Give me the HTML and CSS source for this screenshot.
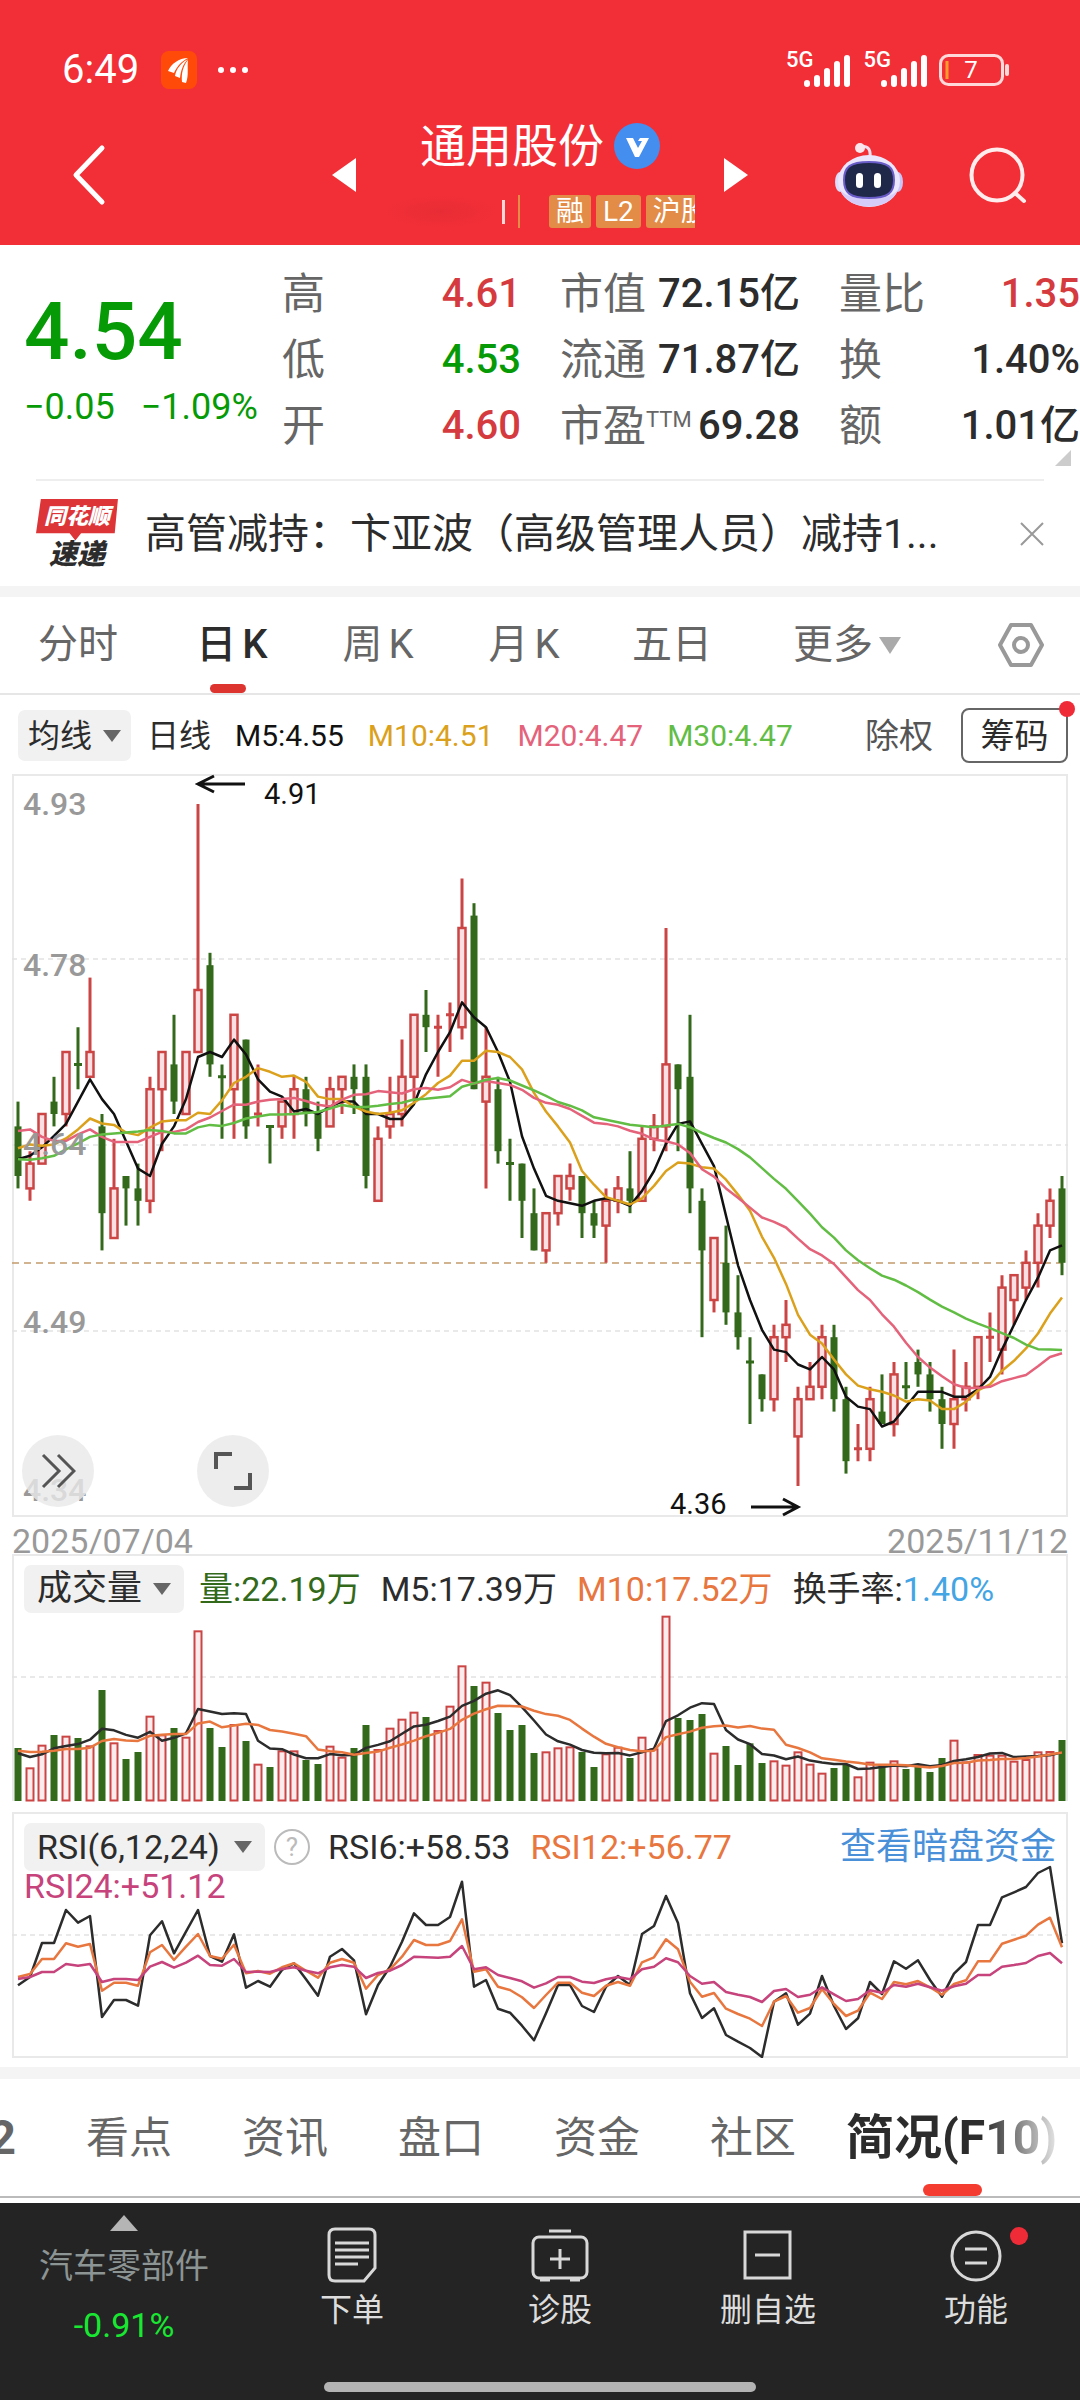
FILE: index.html
```html
<!DOCTYPE html>
<html lang="zh-CN">
<head>
<meta charset="utf-8">
<meta name="viewport" content="width=device-width">
<title>通用股份</title>
<link rel="stylesheet" href="styles.css">
</head>
<body>
<header class="top">
  <div class="status">
    <span class="clock">6:49</span>
    <svg class="app" width="36" height="38" viewBox="0 0 36 38"><rect width="36" height="38" rx="8" fill="#ff4a0a"/><path d="M7 20C10 13 18 7 27 7c-6 3-11 8-14 15zM14 25c1-7 6-13 13-17-5 5-7 11-8 19zM21 31c-1-8 1-16 6-22-1 7 1 15-2 23z" fill="#fff"/></svg>
    <svg class="more" width="32" height="8" viewBox="0 0 32 8" fill="#fff"><circle cx="4" cy="4" r="3"/><circle cx="16" cy="4" r="3"/><circle cx="28" cy="4" r="3"/></svg>
    <span class="spring"></span>
    <span class="net">5G</span>
    <svg class="bars" width="46" height="34" viewBox="0 0 46 34" stroke="#fff" stroke-width="6" stroke-linecap="round"><path d="M3 30v1M13 25v6M23 18v13M33 11v20M43 5v26"/></svg>
    <span class="net">5G</span>
    <svg class="bars" width="46" height="34" viewBox="0 0 46 34" stroke="#fff" stroke-width="6" stroke-linecap="round"><path d="M3 30v1M13 25v6M23 18v13M33 11v20M43 5v26"/></svg>
    <svg class="battery" width="72" height="32" viewBox="0 0 72 32"><rect x="1.500" y="1.500" width="62" height="29" rx="8" fill="none" stroke="#ffd9da" stroke-width="3"/><path d="M68 12v8" stroke="#ffd9da" stroke-width="4" stroke-linecap="round"/><path d="M8 7v18" stroke="#ff9a2e" stroke-width="3"/><text x="32" y="24" text-anchor="middle" class="battery-text">7</text></svg>
  </div>
  <nav class="nav">
    <button class="icon-btn" aria-label="返回"><svg width="34" height="62" viewBox="0 0 34 62"><path d="M30 4 4 31l26 27" fill="none" stroke="#fff" stroke-width="5" stroke-linecap="round" stroke-linejoin="round"/></svg></button>
    <div class="switcher">
      <button class="icon-btn" aria-label="上一只"><svg width="24" height="34" viewBox="0 0 24 34"><path d="M24 0v34L0 17z" fill="#fff"/></svg></button>
      <div class="stock">
        <h1>通用股份<svg width="46" height="46" viewBox="0 0 46 46"><circle cx="23" cy="23" r="23" fill="#438eee"/><path d="M12 15h7l5 10 4-7h-4l2-3h9L25 34h-4z" fill="#fff"/></svg></h1>
        <div class="tags"><i class="smudge"></i><i class="sliver"></i><i class="rule"></i><span>融</span><span>L2</span><span>沪股</span></div>
      </div>
      <button class="icon-btn" aria-label="下一只"><svg width="24" height="34" viewBox="0 0 24 34"><path d="M0 0v34l24-17z" fill="#fff"/></svg></button>
    </div>
    <div class="tools">
      <button class="icon-btn" aria-label="智能助手"><svg width="68" height="66" viewBox="0 0 68 66"><path d="M24 6c7-4 12 0 11 9" fill="none" stroke="#f0dff0" stroke-width="3"/><circle cx="25" cy="6" r="5" fill="#fbe6ee"/><ellipse cx="5" cy="40" rx="5" ry="10" fill="#dcdcfb"/><ellipse cx="63" cy="40" rx="5" ry="10" fill="#c8c4f8"/><ellipse cx="34" cy="39" rx="31" ry="26" fill="#ebe6fb"/><path d="M5 48c8 22 50 22 58 0-10 12-48 12-58 0z" fill="#d5ccfa"/><path d="M34 20c19 0 25 5 25 18S53 56 34 56 9 51 9 38s6-18 25-18z" fill="#1f2848" stroke="#6a5cc8" stroke-width="2"/><rect x="21" y="31" width="7" height="15" rx="3.500" fill="#fff"/><rect x="39" y="31" width="7" height="15" rx="3.500" fill="#fff"/></svg></button>
      <button class="icon-btn" aria-label="搜索"><svg width="58" height="58" viewBox="0 0 58 58" fill="none" stroke="#ffeced" stroke-width="4" stroke-linecap="round"><circle cx="28" cy="29" r="25.500"/><path d="m46 47 9 8"/></svg></button>
    </div>
  </nav>
</header>
<main>
  <section class="quote">
    <div class="price"><strong>4.54</strong><p><span>−0.05</span><span>−1.09%</span></p></div>
    <dl><div><dt>高</dt><dd class="up">4.61</dd></div><div><dt>低</dt><dd class="down">4.53</dd></div><div><dt>开</dt><dd class="up">4.60</dd></div></dl>
    <dl><div><dt>市值</dt><dd>72.15亿</dd></div><div><dt>流通</dt><dd>71.87亿</dd></div><div><dt>市盈<sup>TTM</sup></dt><dd>69.28</dd></div></dl>
    <dl><div><dt>量比</dt><dd class="up">1.35</dd></div><div><dt>换</dt><dd>1.40%</dd></div><div><dt>额</dt><dd>1.01亿</dd></div></dl>
    <i class="corner"></i>
  </section>
  <section class="news">
    <div class="news-logo"><b>同花顺</b><em>速递</em></div>
    <a href="#news">高管减持：卞亚波（高级管理人员）减持1...</a>
    <button class="icon-btn" aria-label="关闭"><svg width="24" height="24" viewBox="0 0 24 24"><path d="m1 1 22 22M23 1 1 23" stroke="#999" stroke-width="2"/></svg></button>
  </section>
  <nav class="periods">
    <button>分时</button><button class="on">日<span>K</span></button><button>周<span>K</span></button><button>月<span>K</span></button><button>五日</button><button>更多<i class="tri light"></i></button>
    <button aria-label="设置"><svg width="46" height="46" viewBox="0 0 46 46" fill="none" stroke="#999" stroke-width="4" stroke-linejoin="round"><path d="M13 3h20l11 20-11 20H13L2 23z"/><circle cx="23" cy="23" r="7"/></svg></button>
  </nav>
  <section class="legend">
    <label class="pick"><select aria-label="主图指标"><option>均线</option></select><i class="tri"></i></label>
    <span class="day">日线</span><span class="c-black">M5:4.55</span><span class="c-gold">M10:4.51</span><span class="c-pink">M20:4.47</span><span class="c-green">M30:4.47</span>
    <button class="adjust">除权</button><button class="chips">筹码<i class="dot"></i></button>
  </section>
  <section class="charts">
    <div class="panel">
      <svg id="kline" class="plot" viewBox="0 0 1056 743" role="img" aria-label="日K线"></svg>
      <button class="round expand" aria-label="展开"><svg width="36" height="36" viewBox="0 0 36 36"><path d="m3 2 16 16L3 34M18 2l16 16-16 16" fill="none" stroke="#555" stroke-width="3"/></svg></button>
      <button class="round full" aria-label="全屏"><svg width="38" height="38" viewBox="0 0 38 38"><path d="M2 17V2h16M36 21v15H20" fill="none" stroke="#555" stroke-width="4"/></svg></button>
    </div>
    <div class="dates"><time>2025/07/04</time><time>2025/11/12</time></div>
    <div class="panel volume">
      <svg id="volume" class="plot" viewBox="0 0 1056 248" role="img" aria-label="成交量"></svg>
      <div class="readout">
        <label class="pick"><select aria-label="副图指标一"><option>成交量</option></select><i class="tri"></i></label>
        <span class="c-deep">量:22.19万</span><span>M5:17.39万</span><span class="c-orange">M10:17.52万</span><span>换手率:<b class="c-blue">1.40%</b></span>
      </div>
    </div>
    <div class="panel">
      <svg id="rsi" class="plot" viewBox="0 0 1056 246" role="img" aria-label="RSI"></svg>
      <div class="readout rsi">
        <label class="pick"><select aria-label="副图指标二"><option>RSI(6,12,24)</option></select><i class="tri"></i></label>
        <button class="help" aria-label="说明">?</button><span>RSI6:+58.53</span><span class="c-orange">RSI12:+56.77</span>
        <a href="#funds">查看暗盘资金</a>
        <span class="c-plum second">RSI24:+51.12</span>
      </div>
    </div>
  </section>
  <nav class="sections">
    <a class="cut" href="#l2">2</a><a href="#k">看点</a><a href="#n">资讯</a><a href="#p">盘口</a><a href="#z">资金</a><a href="#s">社区</a><a class="on" href="#f10">简况(F10)</a>
  </nav>
</main>
<footer class="dock">
  <button class="sector"><i class="tri-up"></i><span>汽车零部件</span><b>-0.91%</b></button>
  <button><svg width="50" height="56" viewBox="0 0 50 56" fill="none" stroke="#d8d8d8" stroke-width="3"><path d="M8 2h34q6 0 6 6v33L37 54H8q-6 0-6-6V8q0-6 6-6z"/><path d="M8 16h34M8 23h34M8 30h34M8 37h23"/></svg>下单</button>
  <button><svg width="58" height="56" viewBox="0 0 58 56" fill="none" stroke="#d8d8d8" stroke-width="3"><path d="M18 4h22"/><rect x="2" y="10" width="54" height="41" rx="6"/><path d="M29 22v20M19 32h20M9 53h10M39 53h10"/></svg>诊股</button>
  <button><svg width="50" height="56" viewBox="0 0 50 56" fill="none" stroke="#d8d8d8" stroke-width="3"><rect x="2" y="5" width="45" height="46"/><path d="M12 28h25"/></svg>删自选</button>
  <button><svg width="52" height="56" viewBox="0 0 52 56" fill="none" stroke="#d8d8d8" stroke-width="3"><circle cx="26" cy="29" r="24"/><path d="M15 22h22M15 36h22"/></svg>功能<i class="dot"></i></button>
  <div class="home"></div>
</footer>
<script src="chart.js"></script>
</body>
</html>
```
FILE: styles.css
```css
* { box-sizing: border-box; }
body { margin: 0; background: #fff; color: #2c2c2c; font-family: Roboto, "Noto Sans CJK SC", sans-serif; }
button, select { border: 0; padding: 0; margin: 0; background: none; font: inherit; color: inherit; appearance: none; white-space: nowrap; }
a { color: inherit; text-decoration: none; }
svg { display: block; flex: none; }
h1, p, dl, dd { margin: 0; }

.top { background: #f22f37; color: #fff; }
.status { display: flex; align-items: center; height: 100px; padding: 40px 69px 0 62px; }
.clock { font-size: 40px; line-height: 40px; }
.app { margin-left: 22px; }
.more { margin-left: 20px; }
.spring { flex: 1; }
.net { font-size: 22px; line-height: 22px; font-weight: 500; margin-right: -10px; padding-bottom: 20px; }
.bars + .net { margin-left: 14px; }
.battery { margin-left: 12px; }
.battery-text { fill: #fff; font-size: 24px; }
.nav { display: grid; grid-template-columns: 1fr 416px 1fr; align-items: center; height: 145px; padding: 4px 53px 0; }
.nav > .icon-btn { margin-left: 19px; justify-self: start; }
.switcher { display: flex; align-items: center; justify-content: space-between; }
.stock { width: 310px; }
.stock h1 { display: flex; align-items: center; justify-content: center; gap: 10px; font-size: 46px; line-height: 50px; font-weight: 400; white-space: nowrap; }
.tags { display: flex; margin-top: 24px; height: 33px; overflow: hidden; }
.tags span { flex: none; background: #e28c47; font-size: 28px; line-height: 33px; padding: 0 7px; margin-right: 5px; border-radius: 3px; }
.smudge { flex: none; width: 112px; margin-right: 5px; background: radial-gradient(closest-side, #e82c35, #f22f37); }
.sliver { flex: none; width: 3px; height: 24px; margin: 5px 13px 0 0; background: #ffd7d8; }
.rule { flex: none; width: 2px; margin-right: 29px; background: #e28c47; }
.tools { display: flex; align-items: center; justify-content: flex-end; gap: 66px; }

.quote { position: relative; display: grid; grid-template-columns: minmax(0, 243fr) minmax(0, 239fr) minmax(0, 240fr) minmax(0, 241fr); column-gap: 39px; padding: 16px 0 20px; }
.price { padding: 31px 0 0 24px; color: #079a07; white-space: nowrap; }
.price strong { display: block; font-size: 80px; line-height: 80px; font-weight: 500; }
.price p { display: flex; gap: 26px; margin-top: 15px; font-size: 36px; line-height: 40px; }
.quote dl > div { display: flex; justify-content: space-between; align-items: center; height: 66px; white-space: nowrap; }
.quote dt { font-size: 43px; line-height: 66px; color: #666; }
.quote dd { font-size: 40px; line-height: 66px; font-weight: 500; }
.quote sup { font-size: 22px; line-height: 22px; vertical-align: 14px; }
.up { color: #d53a3e; }
.down { color: #079a07; }
.corner { position: absolute; right: 9px; bottom: 13px; border: solid transparent; border-width: 0 0 16px 16px; border-bottom-color: #ccc; }

.news { display: flex; align-items: center; height: 107px; margin: 0 36px; border-top: 2px solid #eee; }
.news-logo { width: 82px; height: 70px; margin-right: 27px; text-align: center; font-style: italic; }
.news-logo b { display: block; height: 42px; background: #dd3438; color: #fff; font-size: 22px; line-height: 35px; font-weight: 900; clip-path: polygon(6% 0, 100% 0, 96% 83%, 55% 83%, 48% 100%, 41% 83%, 0 83%); }
.news-logo em { display: block; margin-top: -3px; font-size: 28px; line-height: 34px; font-weight: 900; }
.news a { flex: 1; font-size: 41px; line-height: 60px; white-space: nowrap; }

.periods { display: grid; grid-template-columns: 156fr 152fr 140fr 152fr 144fr 206fr 130fr; height: 109px; border-top: 11px solid #f4f4f4; border-bottom: 2px solid #e6e6e6; }
.periods button { position: relative; display: flex; align-items: center; justify-content: center; gap: 6px; font-size: 40px; line-height: 60px; color: #666; }
.periods button:last-child { padding-left: 12px; }
.periods .on { color: #2c2c2c; font-weight: 500; }
.periods .on::after { content: ""; position: absolute; left: calc(50% - 22px); bottom: 0; width: 36px; height: 9px; border-radius: 5px; background: #dd3430; }
.tri { flex: none; border: solid transparent; border-width: 12px 9px 0; border-top-color: #666; }
.tri.light { border-width: 17px 11px 0; border-top-color: #aaa; }
.legend { display: flex; align-items: center; height: 79px; padding: 2px 12px 0 18px; font-size: 30px; line-height: 50px; white-space: nowrap; }
.legend > span { margin-right: 24px; }
.legend .day { font-size: 32px; margin-left: 16px; }
.pick { display: flex; align-items: center; gap: 10px; height: 48px; padding: 0 13px; border-radius: 7px; background: #f1f1f1; }
.legend .pick { padding: 0 10px; height: 51px; font-size: 32px; }
.pick select { height: 48px; line-height: 48px; }
.adjust { margin-left: auto; font-size: 34px; color: #555; }
.chips { position: relative; width: 107px; height: 55px; margin-left: 28px; border: 2px solid #666; border-radius: 8px; font-size: 34px; line-height: 50px; }
.dot { position: absolute; width: 16px; height: 16px; border-radius: 50%; background: #f02b38; }
.chips .dot { top: -9px; right: -9px; }
.c-black { color: #111; } .c-gold { color: #dba11c; } .c-pink { color: #e4637a; } .c-green { color: #62bd45; }
.c-deep { color: #33691a; } .c-orange { color: #e8763f; } .c-blue { color: #44a5e4; font-weight: 400; } .c-plum { color: #c6437c; }

.charts { padding: 0 12px 9px; }
.panel { position: relative; display: grid; }
.plot { grid-area: 1 / 1; width: 100%; height: auto; }
.volume { margin-bottom: 10px; }
.round { position: absolute; bottom: 10px; width: 72px; height: 72px; display: grid; place-items: center; border-radius: 50%; background: rgba(232, 232, 232, .8); }
.expand { left: 10px; }
.full { left: 185px; }
.dates { display: flex; justify-content: space-between; padding-top: 12px; font-size: 34px; line-height: 25px; color: #999; }
.readout { grid-area: 1 / 1; display: flex; align-items: center; align-self: start; padding: 11px 12px 0; font-size: 34px; line-height: 48px; white-space: nowrap; }
.readout > span { margin-left: 20px; }
.volume .pick { font-size: 35px; }
.readout > .pick + span { margin-left: 15px; }
.rsi { flex-wrap: wrap; }
.rsi .pick { gap: 14px; }
.rsi > .help { width: 36px; height: 36px; margin: 0 -2px 0 9px; border: 2px solid #bbb; border-radius: 50%; color: #bbb; font-size: 26px; line-height: 30px; }
.rsi > a { margin-left: auto; font-size: 36px; color: #4a90d9; }
.rsi > .second { width: 100%; margin: 0; line-height: 30px; }
.axis { font-size: 32px; font-weight: 500; fill: #999; }
.note { font-size: 29px; fill: #111; }

.sections { position: relative; display: flex; align-items: center; gap: 70px; height: 131px; overflow: hidden; border-top: 12px solid #f4f4f4; border-bottom: 2px solid #bbb; font-size: 43px; line-height: 60px; color: #666; white-space: nowrap; }
.sections .cut { width: 16px; direction: rtl; overflow: hidden; font-size: 48px; font-weight: 700; }
.sections .on { position: relative; margin-left: -20px; line-height: 117px; font-size: 48px; font-weight: 700; background: linear-gradient(90deg, #2c2c2c 65%, #fff 105%); background-clip: text; color: transparent; }
.sections .on::after { content: ""; position: absolute; left: calc(50% - 29px); bottom: 0; width: 59px; height: 12px; border-radius: 6px; background: #f43d30; }

.dock { display: grid; grid-template-columns: 248fr 208fr 208fr 208fr 208fr; margin-top: 5px; min-height: 197px; background: #242424; color: #ddd; font-size: 32px; line-height: 40px; }
.dock button { position: relative; display: flex; flex-direction: column; align-items: center; gap: 7px; height: 150px; padding-top: 24px; }
.dock .dot { width: 18px; height: 18px; top: 24px; left: calc(50% + 34px); }
.dock .sector { padding-top: 12px; gap: 15px; font-size: 34px; color: #8c9494; }
.sector b { color: #19e832; font-weight: 400; margin-top: 4px; }
.tri-up { border: solid transparent; border-width: 0 14px 16px; border-bottom-color: #b5b5b5; }
.home { grid-column: 1 / -1; justify-self: center; width: 40%; height: 10px; margin-top: 20px; border-radius: 5px; background: #b3b3b3; }
```
FILE: chart.js
```js
// Each candle: colour, then high, body top, body bottom, low, in cents below 4.91.
const candles = `G24,26,30,31 R28,29,31,32 R25,25,29,29 G22,24,25,26 R20,20,25,26 G18,21,21,23 R14,20,22,22 G25,26,33,36
R27,31,35,35 G30,30,31,34 G29,31,32,34 R22,23,32,33 R20,20,23,28 G17,21,24,25 R20,20,25,25 R0,15,20,20
G12,13,21,22 G21,22,22,27 R17,17,23,27 G19,19,26,27 R21,25,25,26 G26,26,26,29 R24,24,26,27 R22,23,25,27
G22,23,25,26 G24,25,27,28 R22,23,26,26 R22,22,23,25 G21,22,23,25 G21,22,30,31 R26,27,32,32 R22,25,26,27
R19,22,25,26 R17,17,22,24 G15,17,18,20 R17,18,18,22 R16,17,17,20 R6,10,18,19 G8,9,23,23 R18,22,24,31
G22,23,28,29 G27,29,29,32 G29,29,32,35 G31,33,36,36 R33,33,36,37 R30,30,33,34 R29,30,31,32 G30,30,33,35
G32,33,34,35 R31,32,34,37 R30,31,32,33 G28,31,32,33 R26,27,32,32 R25,26,27,28 R10,21,26,28 G21,21,23,28
G17,22,31,33 G31,32,36,43 R35,35,40,41 G34,37,41,42 G38,41,43,44 G43,45,45,50 G46,46,48,49 R42,43,48,49
R40,42,43,45 R47,48,51,55 R45,47,48,48 R42,43,47,48 G42,43,48,49 G47,48,53,54 R50,52,52,53 R47,48,52,53
G46,49,50,50 R45,46,50,51 G45,47,47,48 G44,45,46,47 G45,46,48,49 G47,48,50,52 R44,48,50,52 R45,47,48,49
R43,43,47,48 R41,43,43,45 R38,39,44,46 R38,38,40,42 R36,37,39,40 R33,34,37,39 R31,32,34,35 G30,31,37,38`
  .split(/\s+/).map(s => ({ up: s[0] === 'R', v: s.slice(1).split(',').map(Number) }));

const volumeTops = [684,742,674,645,647,654,676,510,667,717,696,587,643,624,650,331,624,681,612,663,731,741,691,691,720,732,677,710,684,615,
687,623,596,575,591,630,557,436,498,485,579,630,615,699,694,682,679,696,741,700,680,714,650,685,287,594,600,582,698,678,
735,670,729,721,734,694,731,758,744,733,769,725,733,721,747,737,756,714,659,724,702,704,704,722,717,694,693,660];
const rsi6 = [556,531,429,429,330,368,348,651,600,600,617,406,364,460,395,330,468,485,403,563,543,560,510,490,538,587,470,447,481,643,
555,500,425,340,375,375,351,245,560,540,626,638,677,721,640,555,555,618,636,560,528,555,402,378,288,369,580,654,625,705,
725,744,771,605,580,674,641,528,618,687,655,546,582,484,506,481,540,590,521,486,375,375,292,277,261,219,201,430];
const rsi12 = [531,522,477,477,430,440,432,572,548,548,557,457,435,480,440,402,468,476,434,520,513,521,502,490,512,533,488,477,488,566,
525,508,470,420,435,435,423,358,515,508,560,570,592,624,585,548,548,578,588,557,546,557,487,472,418,448,545,590,579,626,
642,656,678,605,588,638,624,567,612,648,632,578,597,546,553,543,562,584,552,541,484,484,431,419,407,374,353,442];
const rsi24 = [537,531,516,516,492,497,492,546,537,537,540,500,486,503,488,467,495,497,477,516,515,516,507,502,512,520,502,495,500,534,
519,512,495,470,472,473,470,438,508,502,525,534,544,563,550,531,531,545,549,538,531,538,508,500,475,487,528,551,546,576,
584,591,606,573,567,591,584,562,583,603,597,571,578,555,560,551,562,572,559,551,525,525,500,495,489,468,459,490];

const x = i => 6 + 12 * i;
const price = k => 30 + 12.4 * k;
const third = off => t => t / 3 - off;

function average(values, n, head) {
  return values.map((_, i) => i < n - 1 ? head[i] : values.slice(i - n + 1, i + 1).reduce((a, b) => a + b) / n);
}
function line(values, y, color, w) {
  const pts = values.map((v, i) => x(i) + ',' + y(v).toFixed(1)).join(' ');
  return `<polyline points="${pts}" fill="none" stroke="${color}" stroke-width="${w}" stroke-linejoin="round"/>`;
}
function rule(y, color = '#e2e2e2', dash = '5 4') {
  return `<path d="M0 ${y}H1056" stroke="${color}" stroke-width="1.500" stroke-dasharray="${dash}"/>`;
}
function frame(h) {
  return `<rect x="1" y="1" width="1054" height="${h - 2}" fill="none" stroke="#e9e9e9" stroke-width="2"/>`;
}
const RED = '#cb4545', GREEN = '#33691a';

const closes = candles.map(c => c.up ? c.v[1] : c.v[2]);
const fromPx = list => list.map(v => (v - 88) / 24.92);
let k = frame(743) + rule(185) + rule(371) + rule(557) + rule(489, '#c39a6b', '7 5');
candles.forEach((c, i) => {
  const [hi, top, bot, lo] = c.v.map(price), cx = x(i), color = c.up ? RED : GREEN;
  if (top === bot) {
    k += `<path d="M${cx} ${hi}V${lo}M${cx - 4} ${top}h8" stroke="${color}" stroke-width="3"/>`;
  } else if (c.up) {
    k += `<path d="M${cx} ${hi}V${top}M${cx} ${bot}V${lo}" stroke="${color}" stroke-width="3"/>`;
    k += `<rect x="${cx - 3.5}" y="${top}" width="7" height="${bot - top}" fill="#fbdfe2" stroke="${color}" stroke-width="2.500"/>`;
  } else {
    k += `<path d="M${cx} ${hi}V${lo}" stroke="${color}" stroke-width="3"/>`;
    k += `<rect x="${cx - 3.5}" y="${top}" width="7" height="${bot - top}" fill="${color}"/>`;
  }
});
k += line(average(closes, 5, fromPx([802,795,778,755])), price, '#111', 2.5);
k += line(average(closes, 10, fromPx([780,772,775,772,760,742,720,730,733])), price, '#dba11c', 2.5);
k += line(average(closes, 20, fromPx([745,742,757,765,765,752,742,757,767,767,767,757,747,747,742,727,718,705,692])), price, '#e4637a', 2.5);
k += line(average(closes, 30, fromPx([802,803,800,795,782,770,757,752,750,748,746,743,745,750,750,738,733,735,729,720,716,712,712,711,709,707,700,693,697])), price, '#62bd45', 2.5);
[['4.93', 41], ['4.78', 202], ['4.64', 381], ['4.49', 559], ['4.34', 727]].forEach(([t, y]) => {
  k += `<text x="11" y="${y}" class="axis">${t}</text>`;
});
k += `<path d="M233 10H186M202 2 186 10l16 8M739 733h47M771 725l15 8-15 8" fill="none" stroke="#111" stroke-width="3"/>`;
k += `<text x="252" y="30" class="note">4.91</text><text x="658" y="740" class="note">4.36</text>`;
document.getElementById('kline').innerHTML = k;

const vy = third(34);
let v = `<path d="M1 247V1H1055V247" fill="none" stroke="#e9e9e9" stroke-width="2"/>` + rule(123);
volumeTops.forEach((t, i) => {
  const y = vy(t);
  v += candles[i].up
    ? `<rect x="${x(i) - 3.5}" y="${y + 1}" width="7" height="${245.5 - y}" fill="#fdecee" stroke="${RED}" stroke-width="2"/>`
    : `<rect x="${x(i) - 3.5}" y="${y}" width="7" height="${247 - y}" fill="${GREEN}"/>`;
});
v += line(average(volumeTops, 5, [700,711,703,685]), vy, '#2c2c2c', 2.5);
v += line(average(volumeTops, 10, [692,696,695,692,687,687,683,663,657]), vy, '#e8763f', 2.5);
document.getElementById('volume').innerHTML = v;

const ry = third(12);
document.getElementById('rsi').innerHTML = frame(246) + rule(123)
  + line(rsi6, ry, '#2c2c2c', 2.5) + line(rsi12, ry, '#e8763f', 2.5) + line(rsi24, ry, '#c6437c', 2.5);
```
